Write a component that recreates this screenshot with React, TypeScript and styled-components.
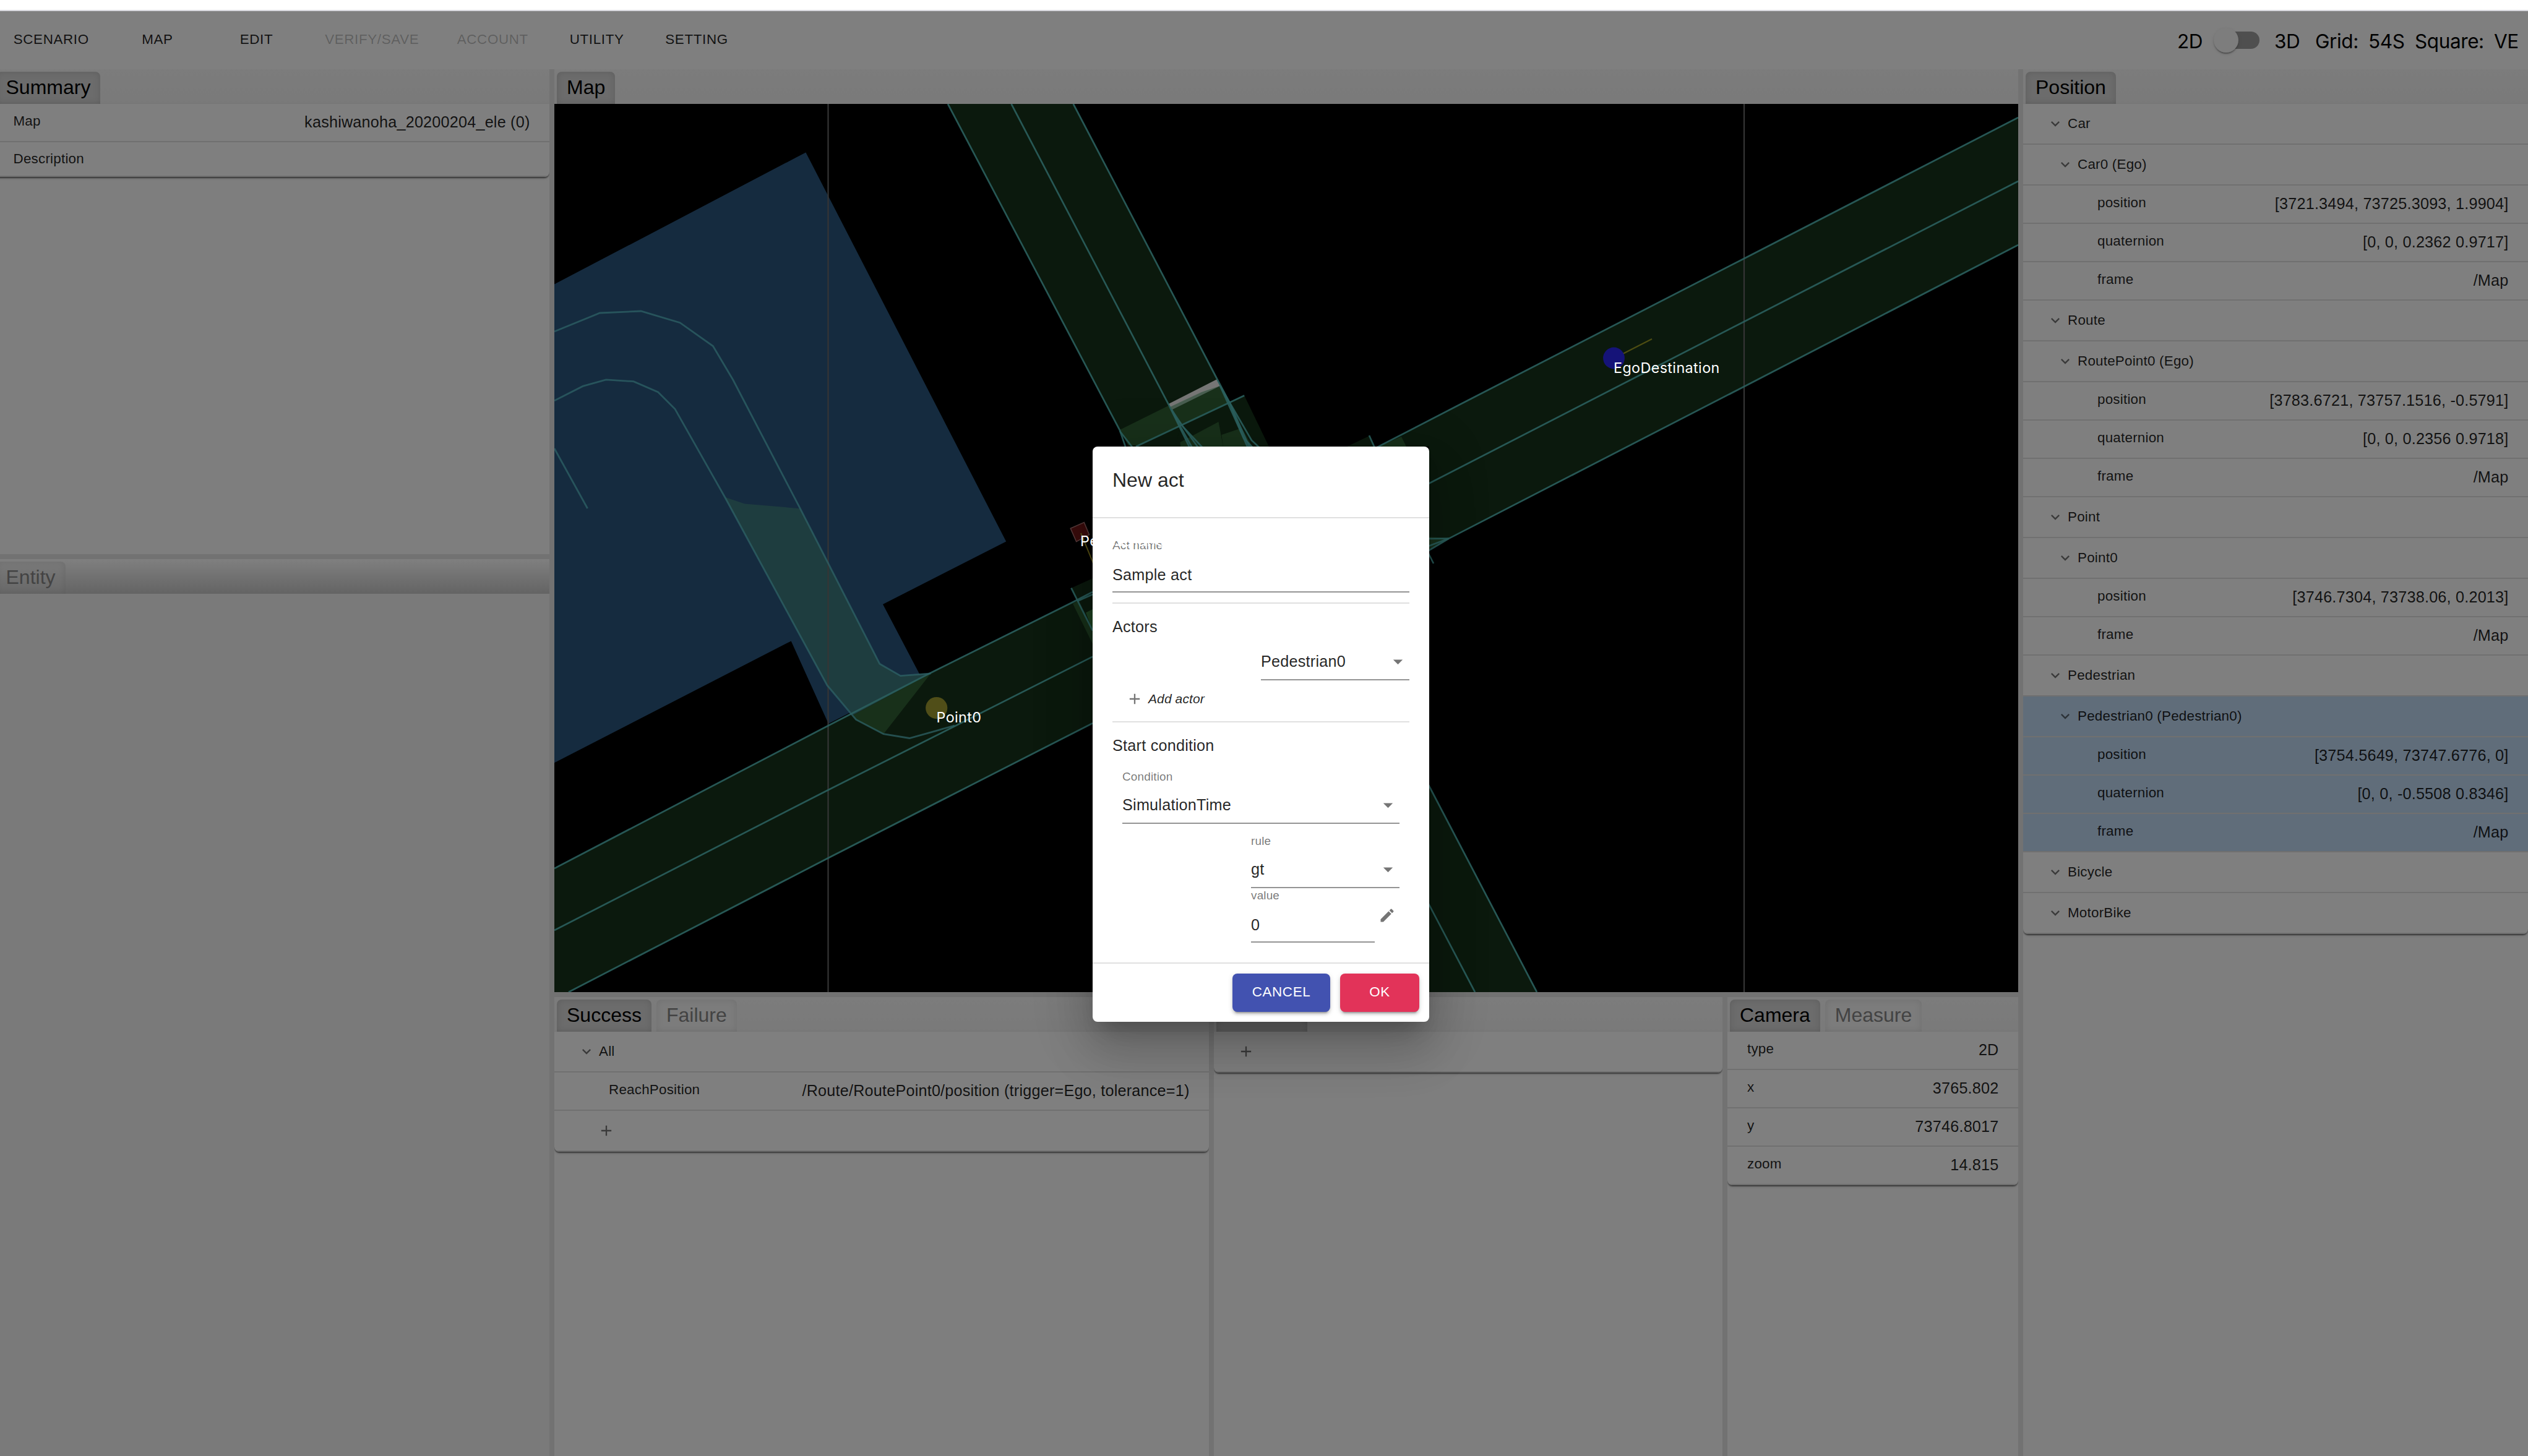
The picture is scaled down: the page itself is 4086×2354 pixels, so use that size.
import React from "react";
import styled, { createGlobalStyle, css } from "styled-components";

const GlobalStyle = createGlobalStyle`
  *, *::before, *::after { box-sizing: border-box; }
  html, body { margin: 0; padding: 0; background: #fff; }
  body { font-family: "Liberation Sans", Arial, Helvetica, sans-serif; }
`;

const LINE = "#e1e1e1";
const SPLIT = "#e4e4e4";

const Page = styled.div`
  position: relative;
  width: 4086px;
  height: 2354px;
  display: flex;
  flex-direction: column;
  overflow: hidden;
  background: #fff;
  color: rgba(0, 0, 0, 0.87);
`;

const TopStrip = styled.div`
  flex: 0 0 18px;
  background: #fff;
  border-bottom: 2px solid #d8d8de;
`;

const Toolbar = styled.header`
  flex: 0 0 94px;
  display: flex;
  justify-content: space-between;
  align-items: center;
  background: #fff;
`;

const MenuBar = styled.nav`
  display: flex;
  margin-left: -9px;
  padding-bottom: 2px;
`;

const MenuButton = styled.span<{ $disabled?: boolean }>`
  min-width: 160px;
  padding: 0 30.7px;
  text-align: center;
  font-size: 22.4px;
  line-height: 40px;
  letter-spacing: 0.64px;
  white-space: nowrap;
  color: ${(p) => (p.$disabled ? "rgba(0,0,0,0.26)" : "rgba(0,0,0,0.87)")};
`;

const ViewInfo = styled.div`
  display: grid;
  grid-template-columns: 59px 98px 66px 86px 75px 128px 55px;
  align-items: center;
  font-family: Inter, "Liberation Sans", sans-serif;
  font-size: 31.5px;
  letter-spacing: -0.4px;
  line-height: 40px;
  color: #000;
  padding-top: 3px;
  white-space: nowrap;
`;

const Switch = styled.span`
  display: flex;
  align-items: center;
  width: 74px;
  height: 40px;
  padding-left: 6px;
  margin-top: -3px;
`;

const SwitchTrack = styled.span`
  width: 68px;
  height: 28px;
  border-radius: 14px;
  background: #9e9e9e;
  display: flex;
  align-items: center;
`;

const SwitchThumb = styled.span`
  flex: 0 0 40px;
  height: 40px;
  margin-left: -6px;
  border-radius: 50%;
  background: #fafafa;
  box-shadow: 0 4px 2px -2px rgba(0, 0, 0, 0.2), 0 2px 2px rgba(0, 0, 0, 0.14),
    0 2px 6px rgba(0, 0, 0, 0.12);
`;

const Workspace = styled.main`
  flex: 1;
  min-height: 0;
  display: flex;
`;

const Column = styled.section<{ $w?: number }>`
  ${(p) => (p.$w ? css`flex: 0 0 ${p.$w}px;` : css`flex: 1;`)}
  min-width: 0;
  display: flex;
  flex-direction: column;
  overflow: hidden;
`;

const Splitter = styled.div`
  flex: 0 0 8px;
  background: ${SPLIT};
`;

const BottomRow = styled.div`
  flex: 1;
  min-height: 0;
  display: flex;
`;

const Panel = styled.div<{ $h?: number; $bleed?: boolean; $bg?: string }>`
  ${(p) => (p.$h ? css`flex: 0 0 ${p.$h}px;` : css`flex: 1;`)}
  min-height: 0;
  display: flex;
  flex-direction: column;
  margin-left: ${(p) => (p.$bleed ? "-10.5px" : "0")};
  background: ${(p) => p.$bg || "#fdfdfd"};
`;

const TabBar = styled.div<{ $idle?: boolean }>`
  flex: 0 0 56px;
  display: flex;
  align-items: flex-end;
  gap: 8px;
  padding: 0 4px;
  background: ${(p) =>
    p.$idle ? "linear-gradient(#fff, #c8c8c8)" : "linear-gradient(#f8f8f8, #f4f4f4)"};
`;

const Tab = styled.div<{ $state: "active" | "inactive" | "idle" }>`
  height: 52px;
  padding: 0 16px;
  border-radius: 8px 8px 0 0;
  font-size: 32px;
  line-height: 50px;
  white-space: nowrap;
  color: ${(p) => (p.$state === "active" ? "#000" : "#868686")};
  background: ${(p) =>
    p.$state === "active"
      ? "#d8d8d8"
      : p.$state === "inactive"
        ? "#f8f8f8"
        : "linear-gradient(#f4f4f4, #d0d0d0)"};
  box-shadow: inset 0 0 12px
    ${(p) => (p.$state === "active" ? "rgba(0,0,0,0.13)" : "rgba(0,0,0,0.1)")};
`;

const Card = styled.div`
  background: #fff;
  border-radius: 0 0 8px 8px;
  overflow: hidden;
  box-shadow: 0 4px 2px -2px rgba(0, 0, 0, 0.28), 0 2px 2px rgba(0, 0, 0, 0.3),
    0 2px 6px rgba(0, 0, 0, 0.12);
`;

const RowBox = styled.div<{ $h: number; $pad: number; $on?: boolean }>`
  height: ${(p) => p.$h}px;
  padding: 0 31.5px 0 ${(p) => p.$pad}px;
  display: flex;
  align-items: center;
  border-bottom: 2px solid ${LINE};
  background: ${(p) => (p.$on ? "#c0daf4" : "transparent")};
`;

const RowLabel = styled.span<{ $lift?: number }>`
  margin-left: 1px;
  font-size: 22.4px;
  line-height: 30px;
  letter-spacing: 0.22px;
  padding-bottom: ${(p) => p.$lift || 0}px;
  white-space: nowrap;
`;

const RowValue = styled.span`
  margin-left: auto;
  padding-bottom: 2px;
  font-size: 25.2px;
  line-height: 34px;
  letter-spacing: 0.21px;
  white-space: nowrap;
`;

const Icon = styled.svg<{ $s: number; $gap?: number }>`
  flex: none;
  width: ${(p) => p.$s}px;
  height: ${(p) => p.$s}px;
  margin-right: ${(p) => p.$gap || 0}px;
  fill: rgba(0, 0, 0, 0.54);
`;

const MapArea = styled.div`
  position: relative;
  flex: 0 0 1436px;
  background: #000;
`;

const MapCanvas = styled.svg`
  display: block;
  width: 2366px;
  height: 1436px;
`;

const MapLabel = styled.span<{ $x: number; $y: number }>`
  position: absolute;
  z-index: 20;
  left: ${(p) => p.$x - 896}px;
  top: ${(p) => p.$y - 168}px;
  font-family: Inter, "Liberation Sans", sans-serif;
  font-size: 23.3px;
  line-height: 28px;
  letter-spacing: 0.4px;
  color: #fff;
  white-space: nowrap;
`;

const Backdrop = styled.div`
  position: absolute;
  z-index: 10;
  inset: 18px 0 0 0;
  padding: 2px 10px 0 0;
  display: flex;
  align-items: center;
  justify-content: center;
  background: rgba(0, 0, 0, 0.5);
`;

const Dialog = styled.div`
  width: 544px;
  height: 930px;
  display: flex;
  flex-direction: column;
  border-radius: 8px;
  background: #fff;
  box-shadow: 0 22px 30px -14px rgba(0, 0, 0, 0.2), 0 48px 76px 6px rgba(0, 0, 0, 0.14),
    0 18px 92px 16px rgba(0, 0, 0, 0.12);
`;

const DialogTitle = styled.div`
  flex: 0 0 116px;
  padding: 0 32px 5px;
  display: flex;
  align-items: center;
  font-size: 32px;
  letter-spacing: 0;
  border-bottom: 2px solid #e0e0e0;
`;

const DialogBody = styled.div`
  flex: 1;
  padding: 32px 32px 0;
  display: flex;
  flex-direction: column;
`;

const DialogFooter = styled.div`
  flex: 0 0 96px;
  padding: 0 16px;
  display: flex;
  align-items: center;
  justify-content: flex-end;
  gap: 16px;
  border-top: 2px solid #e0e0e0;
`;

const DialogButton = styled.div<{ $w: number; $c: string }>`
  width: ${(p) => p.$w}px;
  height: 62px;
  border-radius: 8px;
  background: ${(p) => p.$c};
  color: #fff;
  font-size: 22.4px;
  line-height: 60px;
  letter-spacing: 0.64px;
  text-align: center;
  box-shadow: 0 6px 2px -4px rgba(0, 0, 0, 0.2), 0 4px 4px rgba(0, 0, 0, 0.14),
    0 2px 10px rgba(0, 0, 0, 0.12);
`;

const Divider = styled.div<{ $gap?: number }>`
  flex: 0 0 2px;
  margin-top: ${(p) => p.$gap || 0}px;
  background: #e0e0e0;
`;

const Heading = styled.div`
  flex: 0 0 66px;
  padding-top: 10px;
  font-size: 25.2px;
  line-height: 54px;
  letter-spacing: 0.24px;
`;

const FieldBox = styled.div<{ $w?: number; $bare?: boolean }>`
  height: ${(p) => (p.$bare ? 58 : 88)}px;
  ${(p) => (p.$w ? css`width: ${p.$w}px;` : "")}
  ${(p) => (p.$bare ? css`align-self: flex-end;` : "")}
  display: flex;
  flex-direction: column;
  justify-content: space-between;
  border-bottom: 2px solid #949494;
`;

const FieldLabel = styled.span`
  font-size: 18.9px;
  line-height: 23px;
  letter-spacing: 0.18px;
  color: rgba(0, 0, 0, 0.54);
`;

const FieldValue = styled.div<{ $h: number }>`
  height: ${(p) => p.$h}px;
  padding-bottom: 2px;
  display: flex;
  align-items: center;
  justify-content: space-between;
  font-size: 25.2px;
  letter-spacing: 0.24px;
`;

const AddRow = styled.div`
  flex: 0 0 66px;
  padding: 0 0 6px 22px;
  display: flex;
  align-items: center;
  font-size: 21px;
  font-style: italic;
  letter-spacing: 0.1px;
`;

const Conditions = styled.div`
  margin-top: 10px;
  padding: 0 16px;
  display: flex;
  flex-direction: column;
`;

const RuleGroup = styled.div`
  width: 240px;
  margin: 16px 0 0 auto;
`;

const ValueRow = styled.div`
  display: flex;
  align-items: center;
`;

const IconSlot = styled.span`
  width: 40px;
  display: flex;
  justify-content: center;
`;

const Chevron = () => (
  <Icon $s={28} $gap={5} viewBox="0 0 24 24">
    <path d="M16.59 8.59L12 13.17 7.41 8.59 6 10l6 6 6-6z" />
  </Icon>
);

const Plus = ({ gap }: { gap?: number }) => (
  <Icon $s={28} $gap={gap} viewBox="0 0 24 24">
    <path d="M19 13h-6v6h-2v-6H5v-2h6V5h2v6h6v2z" />
  </Icon>
);

const Arrow = () => (
  <Icon $s={37} viewBox="0 0 24 24">
    <path d="M7 10l5 5 5-5z" />
  </Icon>
);

const Pencil = () => (
  <Icon $s={28} viewBox="0 0 24 24">
    <path d="M3 17.25V21h3.75L17.81 9.94l-3.75-3.75L3 17.25zM20.71 7.04c.39-.39.39-1.02 0-1.41l-2.34-2.34c-.39-.39-1.02-.39-1.41 0l-1.83 1.83 3.75 3.75 1.83-1.83z" />
  </Icon>
);

type PropertyProps = { label: string; value?: string; pad?: number; h?: number; on?: boolean };

const Property = ({ label, value, pad = 31, h = 62, on }: PropertyProps) => (
  <RowBox $h={h} $pad={pad} $on={on}>
    <RowLabel $lift={value ? 4 : 0}>{label}</RowLabel>
    {value && <RowValue>{value}</RowValue>}
  </RowBox>
);

const Group = ({ label, level = 0, on }: { label: string; level?: number; on?: boolean }) => (
  <RowBox $h={66} $pad={38 + level * 16} $on={on}>
    <Chevron />
    <RowLabel>{label}</RowLabel>
  </RowBox>
);

type Entity = { name: string; props: [string, string][]; selected?: boolean };

const positionTree: { name: string; items: Entity[] }[] = [
  {
    name: "Car",
    items: [
      {
        name: "Car0 (Ego)",
        props: [
          ["position", "[3721.3494, 73725.3093, 1.9904]"],
          ["quaternion", "[0, 0, 0.2362 0.9717]"],
          ["frame", "/Map"],
        ],
      },
    ],
  },
  {
    name: "Route",
    items: [
      {
        name: "RoutePoint0 (Ego)",
        props: [
          ["position", "[3783.6721, 73757.1516, -0.5791]"],
          ["quaternion", "[0, 0, 0.2356 0.9718]"],
          ["frame", "/Map"],
        ],
      },
    ],
  },
  {
    name: "Point",
    items: [
      {
        name: "Point0",
        props: [
          ["position", "[3746.7304, 73738.06, 0.2013]"],
          ["frame", "/Map"],
        ],
      },
    ],
  },
  {
    name: "Pedestrian",
    items: [
      {
        name: "Pedestrian0 (Pedestrian0)",
        selected: true,
        props: [
          ["position", "[3754.5649, 73747.6776, 0]"],
          ["quaternion", "[0, 0, -0.5508 0.8346]"],
          ["frame", "/Map"],
        ],
      },
    ],
  },
  { name: "Bicycle", items: [] },
  { name: "MotorBike", items: [] },
];

const ROAD = "#16321a";
const CROSS = "#306034";

const RoadMap = () => (
  <MapCanvas viewBox="896 168 2366 1436">
    <rect x="896" y="168" width="2366" height="1436" fill="#000" />
    {/* parking lot */}
    <polygon
      fill="#2a567e"
      points="896,459.6 1302.4,246.4 1626.2,875.5 1427,977 1488.4,1094 1339,1170 1278.7,1036.4 896,1233.2"
    />
    {/* roads */}
    <polygon
      fill={ROAD}
      points="896,1404 1339,1173 1500,1090 1733,974 1766,960 1766,1169.2 922,1602.5 919,1604 896,1604"
    />
    <polygon
      fill={ROAD}
      points="1532,168 1734.8,168 1967.3,613 1987,650 1990,722 1824,722 1809.9,695.6"
    />
    <polygon
      fill={ROAD}
      points="2227.8,722 2360,653.8 3262,190 3262,396 2341.9,870.6 2310,886 2310,722"
    />
    <polygon fill={ROAD} points="2300,1253 2310,1271 2484,1604 2300,1604" />
    <polygon fill={ROAD} points="1731.4,950.7 1766,935 1766,957 1741,971" />
    <polygon fill={ROAD} points="1987,650 2011.2,639.5 2051,722 1900,722 1908,687" />
    <polygon fill={ROAD} points="2177,722 2213,704.8 2223,722" />
    {/* crosswalks and overlapping lanes */}
    <polygon
      fill={CROSS}
      points="1809.9,695 1888.3,656 1893.8,662.4 1972.2,623.7 1987,650 1840,720 1824,720"
    />
    <polygon fill={CROSS} points="1907.5,715 1969.5,682 1977,722 1908,722" />
    <polygon fill={CROSS} points="1974.4,703 2007,692 2024,722 1977,722" />
    <polygon fill={CROSS} points="2229,722 2265,706 2273,722" />
    <polygon fill={CROSS} points="2310,868 2341.9,870.6 2310,888" />
    <polygon fill={CROSS} points="1734,976 1741,972 1766,1019.6 1766,1041" />
    <polygon fill="#3c8042" points="1755,990.5 1766,985 1766,1019" />
    <polygon
      fill="#3c7a7e"
      points="1171.6,803.8 1203.7,814.4 1293.3,822.2 1421.8,1073.2 1455.5,1092.6 1504.5,1088.8 1379,1156 1336.9,1108"
    />
    <polygon fill={CROSS} points="1379,1156 1504.5,1088.8 1428,1186.7 1383.6,1163.4" />
    {/* stop line */}
    <polygon fill="#fffcfc" opacity="0.92" points="1888.3,653.3 1967.3,613 1972.2,623.7 1893.8,662.4" />
    <polygon fill="#5fa478" opacity="0.65" points="1891,658 1942,634 1972.2,623.7 1893.8,662.4" />
    {/* grid */}
    <g stroke="#6a6a6a" strokeWidth="2.2">
      <line x1="1338.5" y1="168" x2="1338.5" y2="1604" />
      <line x1="2819" y1="168" x2="2819" y2="1604" />
    </g>
    {/* lane borders */}
    <g fill="none" stroke="#55bfbb" strokeOpacity="0.9" strokeWidth="2.7">
      <polyline points="896,1404 1339,1173 1500,1090 1733,974 1766,957" />
      <polyline points="896,1504 1339,1277 1766,1061.6" />
      <polyline points="919,1604 1339,1387 1766,1169.2" />
      <polyline points="1741,972 1766,961" />
      <polyline points="1731.4,950.7 1766,1019.6" />
      <polyline points="1532,168 1809.9,695.6 1819,722" />
      <polyline points="1809.9,697 1831,724" />
      <polyline points="1634.6,168 1888.3,653 1923,724" />
      <polyline points="1734.8,168 1967.3,613 1987,650 2020,724" />
      <polyline points="1836,722 2011.2,639.5" />
      <polyline points="1893.8,662.4 1912,690 1944,724" />
      <polyline points="1893.8,662.4 1908,690 1927,724" />
      <polyline points="1905,680 1937,724" />
      <polyline points="1972,624 1987,650 2010,708 2025,724" />
      <polyline points="1972,624 1992,668 2017,724" />
      <polyline points="1987,650 2023,712 2036,724" />
      <polyline points="2213,704 2222,724" />
      <polyline points="2224,724 2360,653.8 2819,418 3262,190" />
      <polyline points="2306,783.5 2819,520 3262,293" />
      <polyline points="2341.9,870.6 2819,625 3262,396" />
      <polyline points="2341.9,870.6 2306,892" />
      <polyline points="2341.9,870.6 2306,884" />
      <polyline points="2341.9,870.6 2306,871" />
      <polyline points="2308,893 2317,911" />
      <polyline points="2306,1264 2310,1271 2484,1604" />
      <polyline points="2306,1455 2310,1463 2384,1604" />
    </g>
    <g fill="none" stroke="#5cc4cc" strokeOpacity="0.75" strokeWidth="2.8">
      <polyline points="896,536 969.5,506 1036,503 1099,521.7 1152.4,559.5 1184.6,613.8 1293.3,822.2 1421.8,1073.2 1455.5,1092.6 1504.5,1088.8" />
      <polyline points="896,647.7 942,624.4 979.5,613.8 1023.9,616.7 1063.7,634 1091,661.3 1171.6,803.8 1336.9,1108 1383.6,1163.4 1428,1186.7 1470,1193.5 1512,1181.8 1542.7,1173" />
      <polyline points="896,725 949.6,822" />
    </g>
    {/* entities */}
    <circle cx="1513.7" cy="1144.6" r="17.6" fill="#a09c30" />
    <line x1="2623" y1="572" x2="2670" y2="548" stroke="#9c9a24" strokeWidth="2.2" />
    <circle cx="2608.5" cy="579" r="17.4" fill="#2b26f0" />
    <polygon
      fill="#741818"
      stroke="#b07878"
      strokeWidth="1.6"
      points="1730.3,854.3 1752.3,844.6 1760.5,864.5 1739.7,875.7"
    />
    <line x1="1747" y1="862" x2="1768" y2="913" stroke="#a89a28" strokeWidth="2" />
  </MapCanvas>
);

export default function App() {
  return (
    <>
      <GlobalStyle />
      <Page>
        <TopStrip />
        <Toolbar>
          <MenuBar>
            <MenuButton>SCENARIO</MenuButton>
            <MenuButton>MAP</MenuButton>
            <MenuButton>EDIT</MenuButton>
            <MenuButton $disabled>VERIFY/SAVE</MenuButton>
            <MenuButton $disabled>ACCOUNT</MenuButton>
            <MenuButton>UTILITY</MenuButton>
            <MenuButton>SETTING</MenuButton>
          </MenuBar>
          <ViewInfo>
            <span>2D</span>
            <Switch>
              <SwitchTrack>
                <SwitchThumb />
              </SwitchTrack>
            </Switch>
            <span>3D</span>
            <span>Grid:</span>
            <span>54S</span>
            <span>Square:</span>
            <span>VE</span>
          </ViewInfo>
        </Toolbar>

        <Workspace>
          <Column $w={888}>
            <Panel $h={784} $bleed>
              <TabBar>
                <Tab $state="active">Summary</Tab>
              </TabBar>
              <Card>
                <Property label="Map" value="kashiwanoha_20200204_ele (0)" />
                <Property label="Description" h={56} />
              </Card>
            </Panel>
            <Splitter />
            <Panel $bleed $bg="#f5f5f5">
              <TabBar $idle>
                <Tab $state="idle">Entity</Tab>
              </TabBar>
            </Panel>
          </Column>
          <Splitter />

          <Column $w={2366}>
            <TabBar>
              <Tab $state="active">Map</Tab>
            </TabBar>
            <MapArea>
              <RoadMap />
              <MapLabel $x={1746} $y={860.5}>Pedestrian0</MapLabel>
              <MapLabel $x={2608} $y={580.5}>EgoDestination</MapLabel>
              <MapLabel $x={1513.5} $y={1145.5}>Point0</MapLabel>
            </MapArea>
            <Splitter />
            <BottomRow>
              <Column $w={1058}>
                <Panel>
                  <TabBar>
                    <Tab $state="active">Success</Tab>
                    <Tab $state="inactive">Failure</Tab>
                  </TabBar>
                  <Card>
                    <Group label="All" />
                    <Property
                      pad={87}
                      label="ReachPosition"
                      value="/Route/RoutePoint0/position (trigger=Ego, tolerance=1)"
                    />
                    <RowBox $h={66} $pad={70}>
                      <Plus />
                    </RowBox>
                  </Card>
                </Panel>
              </Column>
              <Splitter />
              <Column $w={822}>
                <Panel>
                  <TabBar>
                    <Tab $state="active">Variable</Tab>
                  </TabBar>
                  <Card>
                    <RowBox $h={66} $pad={38}>
                      <Plus />
                    </RowBox>
                  </Card>
                </Panel>
              </Column>
              <Splitter />
              <Column>
                <Panel>
                  <TabBar>
                    <Tab $state="active">Camera</Tab>
                    <Tab $state="inactive">Measure</Tab>
                  </TabBar>
                  <Card>
                    <Property label="type" value="2D" />
                    <Property label="x" value="3765.802" />
                    <Property label="y" value="73746.8017" />
                    <Property label="zoom" value="14.815" />
                  </Card>
                </Panel>
              </Column>
            </BottomRow>
          </Column>
          <Splitter />

          <Column>
            <Panel>
              <TabBar>
                <Tab $state="active">Position</Tab>
              </TabBar>
              <Card>
                {positionTree.map((group) => (
                  <React.Fragment key={group.name}>
                    <Group label={group.name} />
                    {group.items.map((item) => (
                      <React.Fragment key={item.name}>
                        <Group label={item.name} level={1} on={item.selected} />
                        {item.props.map(([label, value]) => (
                          <Property
                            key={label}
                            pad={119}
                            label={label}
                            value={value}
                            on={item.selected}
                          />
                        ))}
                      </React.Fragment>
                    ))}
                  </React.Fragment>
                ))}
              </Card>
            </Panel>
          </Column>
        </Workspace>

        <Backdrop>
          <Dialog>
            <DialogTitle>New act</DialogTitle>
            <DialogBody>
              <FieldBox>
                <FieldLabel>Act name</FieldLabel>
                <FieldValue $h={52}>Sample act</FieldValue>
              </FieldBox>
              <Divider $gap={16} />
              <Heading>Actors</Heading>
              <FieldBox $w={240} $bare>
                <FieldValue $h={56}>
                  Pedestrian0
                  <Arrow />
                </FieldValue>
              </FieldBox>
              <AddRow>
                <Plus gap={8} />
                Add actor
              </AddRow>
              <Divider />
              <Heading>Start condition</Heading>
              <Conditions>
                <FieldBox>
                  <FieldLabel>Condition</FieldLabel>
                  <FieldValue $h={56}>
                    SimulationTime
                    <Arrow />
                  </FieldValue>
                </FieldBox>
                <RuleGroup>
                  <FieldBox>
                    <FieldLabel>rule</FieldLabel>
                    <FieldValue $h={56}>
                      gt
                      <Arrow />
                    </FieldValue>
                  </FieldBox>
                  <ValueRow>
                    <FieldBox $w={200}>
                      <FieldLabel>value</FieldLabel>
                      <FieldValue $h={52}>0</FieldValue>
                    </FieldBox>
                    <IconSlot>
                      <Pencil />
                    </IconSlot>
                  </ValueRow>
                </RuleGroup>
              </Conditions>
            </DialogBody>
            <DialogFooter>
              <DialogButton $w={158} $c="#4252b0">CANCEL</DialogButton>
              <DialogButton $w={128} $c="#e23359">OK</DialogButton>
            </DialogFooter>
          </Dialog>
        </Backdrop>
      </Page>
    </>
  );
}
